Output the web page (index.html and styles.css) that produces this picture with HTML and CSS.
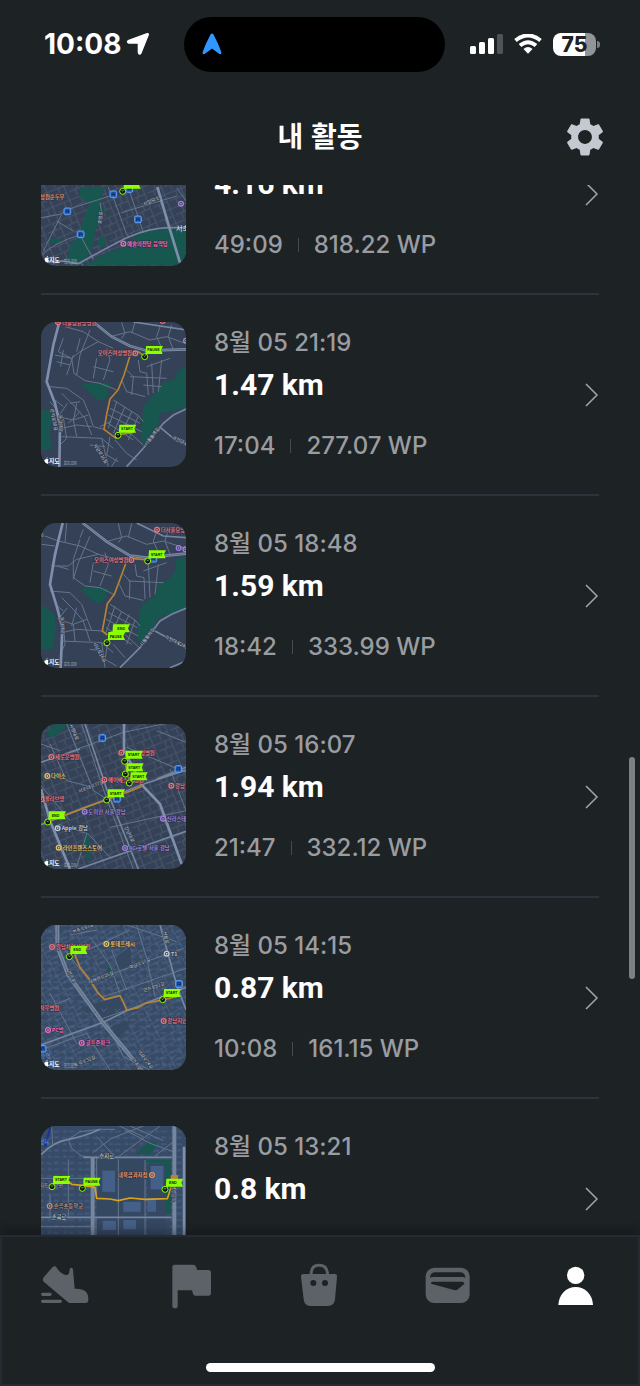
FILE: index.html
```html
<!DOCTYPE html>
<html lang="ko">
<head>
<meta charset="utf-8">
<meta name="viewport" content="width=device-width, initial-scale=1">
<title>내 활동</title>
<link rel="stylesheet" href="styles.css">
</head>
<body>
<svg class="defs" aria-hidden="true">
  <defs>
    <pattern id="streets-a" width="54" height="46" patternUnits="userSpaceOnUse" patternTransform="rotate(-22)">
      <path class="lane" d="M0 6H54M0 28H34M16 6V28M34 0V46M44 28H54M8 28V46"/>
    </pattern>
    <pattern id="streets-b" width="62" height="52" patternUnits="userSpaceOnUse" patternTransform="rotate(-28)">
      <path class="lane" d="M0 5H62M0 32H62M14 5V32M40 5V52M26 32V52M40 18H62"/>
    </pattern>
    <pattern id="blocks" width="46" height="38" patternUnits="userSpaceOnUse">
      <path class="block" d="M4 5h16v6H4zM26 3h14v8H26zM8 22h10v8H8zM24 24h18v5H24z"/>
    </pattern>
    <symbol id="pin" overflow="visible">
      <path class="pin-flag" d="M4 -32H55L49 -20L54 -8H8L2 -2Z"/>
      <circle class="pin-ring" r="9"/>
      <path class="pin-dot" d="M-3 -4L0 0L3 -4"/>
    </symbol>
    <symbol id="station" overflow="visible">
      <rect class="station-box" x="-10" y="-10" width="20" height="20" rx="4"/>
      <path class="station-mark" d="M-4 5V-4H4V5M-4 1H4"/>
    </symbol>
    <symbol id="place" overflow="visible">
      <circle class="place-ring" r="7"/>
      <circle class="place-core" r="3"/>
    </symbol>
    <symbol id="map-credit" overflow="visible">
      <path class="credit-apple" d="M0 -5C3 -7 7 -5 6 -3C4 0 5 3 7 4C5 9 3 9 0 8C-3 9 -5 6 -6 2C-6 -4 -4 -6 0 -5ZM0 -6Q0 -10 4 -11Q4 -7 0 -6"/>
      <text class="credit" x="8" y="7">지도</text>
      <text class="legal" x="52" y="8">법적 정보</text>
    </symbol>
  </defs>
</svg>

<div class="status">
  <div class="status-left">
    <span class="clock">10:08</span>
    <svg class="location" viewBox="0 0 24 24" aria-hidden="true"><path d="M21.500 2.500L2.500 9.500Q2 10 3 10.200H13.200V20.500Q13.500 22 14.200 20.800Z"/></svg>
  </div>
  <div class="island">
    <svg class="nav-arrow" viewBox="0 0 20 22" aria-hidden="true"><path d="M8.5 1.6Q10 -.6 11.5 1.6Q16.5 11 19.4 19.3Q19.6 21.8 17.4 21L10 15.6L2.6 21Q.4 21.8 .6 19.3Q3.5 11 8.5 1.6Z"/></svg>
  </div>
  <div class="status-right">
    <svg class="signal" viewBox="0 0 33 20" aria-hidden="true"><rect y="12" width="6" height="8" rx="1.5"/><rect x="9" y="8" width="6" height="12" rx="1.5"/><rect x="18" y="4" width="6" height="16" rx="1.5"/><rect class="faint" x="27" width="6" height="20" rx="1.5"/></svg>
    <svg class="wifi" viewBox="0 0 28 20" aria-hidden="true"><path class="arc" d="M1.500 6.500Q14 -3.500 26.500 6.500M6 11.600Q14 4.800 22 11.600"/><path d="M9.500 15Q14 11.200 18.500 15L14 19.800Z"/></svg>
    <div class="battery"><span class="battery-level">75</span></div>
  </div>
</div>

<header class="header">
  <h1>내 활동</h1>
  <button class="settings" type="button" aria-label="설정">
    <svg viewBox="0 0 24 24" aria-hidden="true"><path d="M19.140 12.940c.04-.3.060-.61.060-.94 0-.32-.02-.64-.07-.94l2.030-1.580c.18-.14.230-.41.120-.61l-1.920-3.320c-.12-.22-.37-.29-.59-.22l-2.390.960c-.5-.38-1.030-.7-1.620-.94l-.36-2.540c-.04-.24-.24-.41-.48-.41h-3.840c-.24 0-.43.170-.47.410l-.36 2.540c-.59.240-1.130.570-1.620.940l-2.390-.96c-.22-.08-.47 0-.59.220L2.740 8.870c-.12.210-.08.470.120.610l2.030 1.580c-.05.300-.09.630-.09.940s.02.640.07.940l-2.030 1.580c-.18.140-.23.410-.12.610l1.920 3.320c.12.220.370.290.590.220l2.390-.96c.5.380 1.030.7 1.620.940l.36 2.540c.05.240.240.410.480.410h3.840c.24 0 .44-.17.470-.41l.36-2.540c.59-.24 1.130-.56 1.620-.94l2.390.960c.22.080.470 0 .590-.22l1.920-3.320c.12-.22.070-.47-.12-.61l-2.010-1.580zM12 15.600c-1.980 0-3.600-1.620-3.600-3.600s1.620-3.600 3.600-3.600 3.600 1.620 3.600 3.600-1.620 3.600-3.600 3.600z"/></svg>
  </button>
</header>

<main class="feed">
  <ul class="activities">
    <li><a class="activity" href="#activity-1">
      <svg class="thumb" viewBox="33 -180 435 435" aria-hidden="true">
        <rect class="ground" x="33" y="-180" width="435" height="435"/>
        <rect class="dense" x="33" y="-180" width="435" height="435" fill="url(#streets-a)"/>
        <path class="park" d="M150 18H222L211 65L225 95L196 145L190 190L160 253L112 238L120 190L145 170L160 115L178 70L148 45ZM50 174L95 172L90 190L60 188ZM470 150L395 145L350 145L310 170L280 200L230 215L165 253H470ZM200 180L220 162L230 190L212 202Z"/>
        <path class="street" d="M33 110L90 100L130 80L240 45M33 225Q70 185 150 162M40 210L95 100M80 120L130 150M150 162L190 235M300 35L340 155M250 50L290 160L300 170M275 95L440 45M210 65L218 110M120 250Q150 240 160 253M235 18L245 45M440 20L468 60"/>
        <path class="road" d="M33 245L100 240L145 248Q240 195 290 170Q360 140 420 140H468"/>
        <path class="avenue" d="M382 18L418 140L450 245"/>
        <text class="label" transform="translate(342 74) rotate(-22)">사임당로</text>
        <text class="label" transform="translate(214 130) rotate(-84)">효령로</text>
        <text class="district" x="438" y="149">서초</text>
        <g class="food"><text class="poi" x="30" y="54">성원순두부</text></g>
        <g class="leisure"><use href="#place" x="280" y="188"/><text class="poi" x="291" y="194">예술의전당 음악당</text></g>
        <g class="lodging"><use href="#place" x="453" y="68"/></g>
        <use href="#station" x="112" y="91"/><use href="#station" x="152" y="160"/><use href="#station" x="250" y="40"/><use href="#station" x="324" y="115"/><use href="#station" x="298" y="24"/>
        <use href="#pin" x="278" y="31"/>
        <use href="#map-credit" x="50" y="235"/>
      </svg>
      <div class="info"><p class="date">8월 05 22:26</p><p class="distance">4.16 km</p><p class="stats"><span>49:09</span><span class="points">818.22 WP</span></p></div>
      <svg class="chevron" viewBox="0 0 14 24" aria-hidden="true"><path d="M1 1L12 12L1 23"/></svg>
    </a></li>

    <li><a class="activity" href="#activity-2">
      <svg class="thumb" viewBox="33 31 435 435" aria-hidden="true">
        <rect class="ground" x="33" y="31" width="435" height="435"/>
        <path class="park" d="M152 217L200 212L246 216L230 236L240 246L214 269L190 255ZM470 165L445 175L432 205L395 215L380 240L358 260L362 268L340 278L332 375L340 400L360 385L385 340L388 305L420 300L442 294L468 290ZM33 298L58 292L65 330L58 370L66 390L62 415L33 415Z"/>
        <path class="street" d="M105 45L160 60L205 90L250 110M100 80L85 120L125 140L150 120L205 90M75 130L125 140M125 140L132 185L165 207L210 215L260 235M150 80L140 120M180 55L150 130L140 190M80 150L120 160M100 115L92 165M130 130L110 190M60 225L110 230L160 265L175 300L190 345L222 353M95 245L130 280L165 320L185 370M112 275L85 315M120 275L150 270M85 315L130 325L175 310M75 265L100 285M100 320L110 380L90 400M95 350L140 340L185 345M95 375L215 380L250 410M140 275L130 330M150 300L115 335M130 325L140 375M215 380L235 465M240 375L230 430L265 450M255 385L290 425L320 445M290 355L340 400M250 265L325 312L340 330M240 290L330 335M235 310L335 360M235 335L310 385M260 270L235 350M285 285L250 365M305 300L275 365M325 312L295 385M275 205L290 240L345 255M290 175L310 195L305 250M325 145L330 180L350 185L355 250M350 165L420 140M365 155L370 245M395 145L385 240M300 195L410 200M340 220L395 225M240 75L300 60L360 85L410 75L465 95M275 32L285 65L275 80M315 32L305 65M390 45L380 75L395 110M425 40L415 75L430 115M190 165L250 180M200 140L190 200M230 110L240 145L220 205M210 345L240 330M180 400L225 405M60 270L85 300M260 440L245 465"/>
        <path class="road" d="M290 465L340 410L400 335L430 310L468 292M388 345L430 380L468 400M310 31L470 55"/>
        <path class="avenue" d="M88 31L70 100L50 210L75 275L90 340L88 466"/>
        <path class="avenue" d="M190 31L245 75L300 103L350 117L468 113"/>
        <path class="divide" d="M190 31L245 75L300 103L350 117L468 113"/>
        <path class="route" d="M344 134L325 120L300 132L282 190L264 235L240 262L231 303L222 353L258 380L270 368L310 362"/>
        <text class="label" transform="translate(190 400) rotate(58)">사당로16길</text><text class="label" transform="translate(60 292) rotate(78)">관악로30길</text><text class="label" transform="translate(86 310) rotate(88)">동작대로</text>
        <text class="label" transform="translate(350 403) rotate(-52)">서울둘레길</text><text class="label" transform="translate(425 381) rotate(24)">과천대로</text>
        <g class="medical"><use href="#place" x="84" y="32"/><text class="poi" x="96" y="40">더블림요양병원</text><use href="#place" x="316" y="125"/><text class="poi" x="203" y="131">오미즈여성병원</text><use href="#place" x="398" y="28"/></g>
        <g class="lodging"><use href="#place" x="468" y="87"/></g>
        <use href="#pin" x="344" y="135"/><text class="pin-text" x="352" y="119">PAUSE</text>
        <use href="#pin" x="264" y="371"/><text class="pin-text" x="273" y="355">START</text>
        <use href="#map-credit" x="49" y="448"/>
      </svg>
      <div class="info"><p class="date">8월 05 21:19</p><p class="distance">1.47 km</p><p class="stats"><span>17:04</span><span class="points">277.07 WP</span></p></div>
      <svg class="chevron" viewBox="0 0 14 24" aria-hidden="true"><path d="M1 1L12 12L1 23"/></svg>
    </a></li>

    <li><a class="activity" href="#activity-3">
      <svg class="thumb" viewBox="33 36 435 435" aria-hidden="true">
        <rect class="ground" x="33" y="36" width="435" height="435"/>
        <path class="park" d="M152 232L195 227L241 230L225 250L232 260L206 279L185 268ZM470 142L440 142L435 180L415 205L385 220L375 255L338 280L328 300L322 370L328 402L350 380L375 345L385 320L420 310L468 295ZM33 280L58 298L75 310L78 355L68 415L33 415Z"/>
        <path class="street" d="M85 90L150 105L205 130L260 145M80 125L65 165L115 165L140 145L205 130M130 145L130 200L165 225L210 230L255 252M150 85L130 145M180 75L145 155L130 205M80 165L115 175M60 240L120 245L155 280L170 320L185 358L218 360M95 260L130 295L160 330L180 390M112 290L85 325M85 325L130 340L170 325M75 280L100 300M100 335L105 400L90 430M95 365L140 355L185 358M95 390L215 395L250 425M140 290L125 345M130 340L135 390M215 395L225 470M235 385L225 445L260 465M250 400L285 440M285 370L330 412M240 280L315 327L330 345M235 305L322 350M228 325L325 375M228 350L305 400M255 285L228 365M275 300L240 380M298 310L265 380M315 327L290 400M268 220L285 255L340 268M280 190L300 210L298 265M315 160L320 195L342 200L345 265M340 180L410 155M355 160L360 260M385 160L375 250M295 210L400 215M235 90L290 75L350 100L400 90L460 110M265 37L275 80L265 95M305 37L295 80M380 60L370 90L385 125M415 55L405 90L420 130M190 180L245 195M190 155L180 215M225 125L235 160L210 225M180 415L220 420M35 100L75 105M45 75L85 90M110 36L105 95M160 55L150 80"/>
        <path class="road" d="M270 470L330 410L390 330L425 310L468 292M375 360L430 390L468 410M320 36L400 75L468 80M420 470L468 450"/>
        <path class="avenue" d="M98 36L75 130L60 220L80 285L97 350L92 471"/>
        <path class="avenue" d="M158 36L230 92L300 134L350 140L468 128"/><path class="divide" d="M158 36L230 92L300 134L350 140L468 128"/>
        <path class="route" d="M353 147L304 142L290 150L270 205L253 250L232 278L217 360L232 372"/>
        <text class="label" transform="translate(188 397) rotate(60)">사당로16길</text><text class="label" transform="translate(91 318) rotate(88)">동작대로</text><text class="label" transform="translate(337 407) rotate(-54)">서울둘레길</text><text class="label" transform="translate(403 381) rotate(26)">과천대로24길</text><text class="label" x="34" y="77">6</text>
        <g class="medical"><use href="#place" x="381" y="56"/><text class="poi" x="392" y="62">더서울요양병원</text><use href="#place" x="304" y="147"/><text class="poi" x="192" y="153">오미즈여성병원</text></g>
        <g class="lodging"><use href="#place" x="446" y="111"/><use href="#place" x="466" y="115"/></g>
        <use href="#station" x="370" y="143"/>
        <use href="#pin" x="353" y="150"/><text class="pin-text" x="362" y="134">START</text>
        <use href="#pin" x="245" y="372"/><text class="pin-text" x="262" y="356">END</text>
        <use href="#pin" x="231" y="395"/><text class="pin-text" x="239" y="380">PAUSE</text>
        <use href="#map-credit" x="49" y="453"/>
      </svg>
      <div class="info"><p class="date">8월 05 18:48</p><p class="distance">1.59 km</p><p class="stats"><span>18:42</span><span class="points">333.99 WP</span></p></div>
      <svg class="chevron" viewBox="0 0 14 24" aria-hidden="true"><path d="M1 1L12 12L1 23"/></svg>
    </a></li>

    <li><a class="activity" href="#activity-4">
      <svg class="thumb" viewBox="33 40 435 435" aria-hidden="true">
        <rect class="ground" x="33" y="40" width="435" height="435"/>
        <rect class="dense" x="33" y="40" width="435" height="435" fill="url(#streets-a)"/>
        <path class="park" d="M52 62L72 42L106 40L104 52L78 76L58 80ZM165 375L178 366L178 400L184 444L168 444L170 420L162 400ZM40 460L68 462L60 475H45Z"/>
        <path class="street" d="M33 155L280 65L400 40M110 40L190 240L230 265M155 40L230 265L310 475M380 60L468 95M420 175L468 300M60 100L110 210L190 230M33 225L120 330M33 100L90 120M290 110L468 185M85 340L175 370L240 440M240 350L468 300M140 470L170 370"/>
        <path class="road" d="M165 40L235 250L325 475M145 475L468 362M380 205L468 170M33 155L150 115M33 342L230 266L335 222L468 178"/>
        <path class="avenue" d="M282 40V118L335 222L390 280L455 460M33 235L60 330L120 475"/>
        <path class="route" d="M54 333L100 315L160 292L230 268L300 242L332 229L333 213L298 214M284 150L290 180L298 210"/>
        <text class="label" transform="translate(148 247) rotate(-22)">서초대로77길</text><text class="label" transform="translate(118 42) rotate(68)">사평대로</text><text class="label" transform="translate(282 350) rotate(64)">강남대로</text>
        <g class="medical"><use href="#place" x="64" y="139"/><text class="poi" x="75" y="145">세로운병원</text><use href="#place" x="274" y="126"/><text class="poi" x="330" y="132">성병원</text><use href="#place" x="223" y="207"/><text class="poi" x="234" y="213">메이베스트 병원</text><use href="#place" x="34" y="266"/><text class="poi" x="44" y="272">올리브영</text><use href="#place" x="424" y="225"/><text class="poi" x="435" y="231">강남</text></g>
        <g class="shop"><use href="#place" x="52" y="196"/><text class="poi" x="63" y="202">다이소</text><use href="#place" x="86" y="411"/><text class="poi" x="98" y="417">라인프렌즈스토어</text></g>
        <g class="lodging"><use href="#place" x="164" y="303"/><text class="poi" x="175" y="309">도미인 서울 강남</text><use href="#place" x="399" y="324"/><text class="poi" x="410" y="330">신라스테이</text><use href="#place" x="285" y="412"/><text class="poi" x="297" y="418">AC 호텔 서울 강남</text></g>
        <g class="plain"><use href="#place" x="83" y="353"/><text class="poi" x="95" y="359">Apple 강남</text></g>
        <use href="#station" x="217" y="82"/><use href="#station" x="445" y="175"/><use href="#station" x="261" y="264"/>
        <use href="#pin" x="284" y="152"/><text class="pin-text" x="293" y="136">START</text>
        <use href="#pin" x="286" y="190"/><text class="pin-text" x="295" y="174">START</text>
        <use href="#pin" x="298" y="217"/><text class="pin-text" x="307" y="201">START</text>
        <use href="#pin" x="230" y="268"/><text class="pin-text" x="239" y="252">START</text>
        <use href="#pin" x="53" y="334"/><text class="pin-text" x="65" y="318">END</text>
        <use href="#map-credit" x="49" y="457"/>
      </svg>
      <div class="info"><p class="date">8월 05 16:07</p><p class="distance">1.94 km</p><p class="stats"><span>21:47</span><span class="points">332.12 WP</span></p></div>
      <svg class="chevron" viewBox="0 0 14 24" aria-hidden="true"><path d="M1 1L12 12L1 23"/></svg>
    </a></li>

    <li><a class="activity" href="#activity-5">
      <svg class="thumb" viewBox="33 45 435 435" aria-hidden="true">
        <rect class="city" x="33" y="45" width="435" height="435"/>
        <rect x="33" y="45" width="435" height="435" fill="url(#blocks)"/>
        <rect class="dense" x="33" y="45" width="435" height="435" fill="url(#streets-b)"/>
        <path class="quad" d="M150 295L222 272L265 262L285 300L230 335L205 330ZM255 145L300 110L305 165L268 180ZM245 350L300 330L295 355L260 385Z"/>
        <path class="park" d="M229 177L243 170L249 190L238 196Z"/>
        <path class="street" d="M135 135L195 110L300 60M100 115L180 215L205 255M180 80L240 165L270 250M120 75L200 60M245 120L290 240M320 45L350 145L375 260M180 215L460 115M215 262L468 175M33 300L120 265M60 250L140 400M33 420L170 370L240 480M290 45L440 95M205 330L290 300M230 335L280 440L360 480"/>
        <path class="road" d="M33 405L220 337L290 302L468 232M390 45L440 225L468 300M220 340L300 430"/>
        <path class="avenue wide" d="M82 45V110L115 195L220 340L335 480"/><path class="divide" d="M82 45V110L115 195L220 340L335 480"/>
        <path class="route" d="M134 133L150 172L183 214L205 250L224 269L270 257L282 280L290 300L325 293L345 280L397 270L440 260"/>
        <text class="label" transform="translate(130 72) rotate(-22)">언주로93길</text><text class="label" transform="translate(178 222) rotate(-22)">테헤란로25길</text><text class="label" transform="translate(300 178) rotate(-22)">역삼로17길</text><text class="label" transform="translate(342 247) rotate(-20)">언주로81길</text><text class="label" transform="translate(398 65) rotate(76)">선릉로</text><text class="label" transform="translate(112 185) rotate(64)">언주로</text><text class="label" transform="translate(305 450) rotate(55)">언주로</text><text class="label" transform="translate(135 470) rotate(-22)">도곡로32길</text><text class="label" transform="translate(322 425) rotate(52)">역삼로24길</text>
        <path class="marks" d="M215 295l5 10l12-12M255 297l5 10l12-12M180 307l5 10l12-12"/>
        <g class="medical"><use href="#place" x="66" y="111"/><text class="poi" x="78" y="117">강남차여성병원</text><text class="poi" x="29" y="299">차우병원</text><use href="#place" x="401" y="333"/><text class="poi" x="412" y="339">강남지인</text></g>
        <g class="shop"><use href="#place" x="229" y="102"/><text class="poi" x="241" y="108">롯데프레시</text></g>
        <g class="plain"><use href="#place" x="410" y="131"/><text class="poi" x="423" y="137">T1</text></g>
        <g class="leisure"><use href="#place" x="54" y="360"/><text class="poi" x="65" y="367">PC방</text><use href="#place" x="155" y="399"/><text class="poi" x="167" y="405">골프존파크</text></g>
        <use href="#station" x="447" y="222"/><use href="#station" x="38" y="416"/><text class="transit" x="32" y="445">수역</text>
        <use href="#pin" x="118" y="140"/><text class="pin-text" x="130" y="124">END</text>
        <use href="#pin" x="398" y="269"/><text class="pin-text" x="407" y="253">START</text>
        <use href="#map-credit" x="49" y="461"/>
      </svg>
      <div class="info"><p class="date">8월 05 14:15</p><p class="distance">0.87 km</p><p class="stats"><span>10:08</span><span class="points">161.15 WP</span></p></div>
      <svg class="chevron" viewBox="0 0 14 24" aria-hidden="true"><path d="M1 1L12 12L1 23"/></svg>
    </a></li>

    <li><a class="activity" href="#activity-6">
      <svg class="thumb" viewBox="33 48 435 435" aria-hidden="true">
        <rect class="city" x="33" y="48" width="435" height="435"/>
        <rect x="33" y="48" width="435" height="435" fill="url(#blocks)"/>
        <path class="quad" d="M200 148H345V375H200ZM352 160H408V375H352Z"/>
        <path class="building" d="M217 182H255V245H217ZM280 275H332V305H280ZM218 332H258V360H218ZM280 330H318V358H280ZM362 168H400V238H362ZM352 265H378V305H352Z"/>
        <path class="park" d="M318 130L352 98L385 96L360 135ZM348 150H422V312H408V175L400 158H348Z"/>
        <path class="street" d="M115 88L150 65L210 58H255M115 88L125 115L155 138L188 142M65 48L68 105L33 135M115 88L68 105M188 128L245 85L340 48M285 60L360 100L430 125M300 48L400 92M268 138L390 48M375 138L430 95M200 142V265M265 148V375M345 150V375M198 322V375M268 48L340 80M33 205H185M115 148V320M33 350H185M60 255V322M200 80L245 130"/>
        <path class="road" d="M33 134Q70 95 115 88T210 58M160 142H425M33 322H425"/>
        <path class="avenue wide" d="M188 142V483M433 48V483"/>
        <path class="avenue" d="M462 110V483"/>
        <path class="rail" d="M62 48L45 110"/>
        <path class="route bright" d="M112 210L125 223L158 226L195 232L200 265L240 267L265 272L300 264L345 268L412 266L424 230L432 207"/>
        <text class="label strong" x="208" y="143">수지로</text><text class="label strong" x="65" y="328">손곡로</text><text class="label" x="31" y="231">지도 정로인</text><text class="label" transform="translate(426 225) rotate(90)">경수고속</text>
        <text class="transit" x="28" y="101">성복</text>
        <g class="food"><use href="#place" x="366" y="195"/><text class="poi" x="264" y="202">내복곰과자점</text></g>
        <g class="school"><use href="#place" x="59" y="288"/><text class="poi" x="71" y="294">손곡초등학교</text></g>
        <rect class="shield" x="422" y="195" width="22" height="14" rx="3"/>
        <use href="#pin" x="66" y="230"/><text class="pin-text" x="75" y="214">START</text>
        <use href="#pin" x="157" y="235"/><text class="pin-text" x="166" y="219">PAUSE</text>
        <use href="#pin" x="405" y="238"/><text class="pin-text" x="417" y="222">END</text>
      </svg>
      <div class="info"><p class="date">8월 05 13:21</p><p class="distance">0.8 km</p><p class="stats"><span>09:41</span><span class="points">148.20 WP</span></p></div>
      <svg class="chevron" viewBox="0 0 14 24" aria-hidden="true"><path d="M1 1L12 12L1 23"/></svg>
    </a></li>
  </ul>
</main>
<div class="scroll-thumb"></div>

<footer class="dock">
  <nav class="tabs" aria-label="주 메뉴">
    <a class="tab" href="#run" aria-label="러닝"><svg viewBox="111 117 162 162" aria-hidden="true"><path d="M158 141Q165 136 170 143Q182 162 198 165Q205 166 207 160L209 148Q211 142 216 144Q219 145 219 150L224 206Q265 204 265 236V240Q265 249 256 249H207L131 185Q126 179 131 172ZM127 218H151Q155 219 155 223T151 228H127Q123 227 123 223T127 218ZM127 239H181Q186 240 186 244T181 249H127Q123 248 123 244T127 239Z"/></svg></a>
    <a class="tab" href="#quests" aria-label="퀘스트"><svg viewBox="495 117 162 162" aria-hidden="true"><path d="M525 134H580Q587 134 589 142L591 150H625Q633 150 633 158V219Q633 227 625 227H586Q581 227 579 221L576 211H533V257Q533 265 525 265Q517 265 517 257V142Q517 134 525 134Z"/></svg></a>
    <a class="tab" href="#shop" aria-label="상점"><svg viewBox="879 117 162 162" aria-hidden="true"><path d="M910 162H929Q929 131 957 131Q986 131 987 162H1005Q1012 162 1011 170L1005 238Q1003 258 984 258H931Q913 258 911 238L903 170Q903 162 910 162ZM938 162H978Q977 140 957 140Q938 140 938 162Z"/><circle class="cut" cx="940" cy="189" r="9"/><circle class="cut" cx="975" cy="189" r="9"/></svg></a>
    <a class="tab" href="#wallet" aria-label="지갑"><svg viewBox="303 117 162 162" aria-hidden="true"><rect x="317" y="143" width="132" height="106" rx="26"/><path class="cut" d="M330 174V172Q332 157 346 157H420Q434 157 436 172V174Q434 171 427 171H339Q332 171 330 174ZM337 185H428Q434 187 433 192L411 210Q407 211 402 210L333 191Q332 187 337 185Z"/></svg></a>
    <a class="tab active" href="#me" aria-label="내 활동" aria-current="page"><svg viewBox="687 117 162 162" aria-hidden="true"><circle cx="767" cy="166" r="26"/><path d="M715 255Q716 232 731 216Q746 201 767 201T803 216Q818 232 819 255Z"/></svg></a>
  </nav>
  <div class="home-bar"></div>
</footer>
</body>
</html>
```

FILE: styles.css
```css
:root {
  --bg: #1d2225;
  --muted: #999da1;
  --line: #2b343d;
  --lime: #8cff00;
}

* { box-sizing: border-box; }

body {
  position: relative;
  display: flex;
  flex-direction: column;
  height: 100vh;
  margin: 0;
  overflow: hidden;
  background: var(--bg);
  color: #fff;
  font-family: Inter, "Noto Sans CJK KR", sans-serif;
}

h1, p, ul { margin: 0; padding: 0; }
ul { list-style: none; }
a { color: inherit; text-decoration: none; }
svg { display: block; flex: none; }
.defs { position: absolute; width: 0; height: 0; }

/* Status bar */
.status {
  display: grid;
  flex: none;
  grid-template-columns: 1fr 261px 1fr;
  align-items: center;
  height: 88px;
  padding-right: 11px;
}
.status-left { display: flex; align-items: center; gap: 5px; padding-left: 44px; }
.clock { font-size: 28px; font-weight: 700; line-height: 32px; }
.location {
  width: 24px;
  height: 24px;
  fill: #fff;
  stroke: #fff;
  stroke-width: 3;
  stroke-linejoin: round;
}
.island {
  display: flex;
  align-items: center;
  height: 55px;
  padding-left: 18px;
  border-radius: 28px;
  background: #000;
}
.nav-arrow { width: 20px; height: 22px; fill: #2f97ff; }
.status-right { display: flex; align-items: center; justify-content: flex-end; gap: 11px; padding-right: 33px; }
.signal { width: 33px; height: 20px; fill: #fff; }
.signal .faint { fill: #505457; }
.wifi { width: 28px; height: 20px; fill: #fff; }
.wifi .arc { fill: none; stroke: #fff; stroke-width: 4; }
.battery {
  position: relative;
  width: 43px;
  height: 23px;
  border-radius: 8px;
  background: linear-gradient(90deg, #fff 75%, #929496 75%);
}
.battery::after {
  content: "";
  position: absolute;
  top: 8px;
  right: -4px;
  width: 3px;
  height: 7px;
  border-radius: 0 3px 3px 0;
  background: #7c7f81;
}
.battery-level {
  display: block;
  color: #1d2225;
  font-size: 21px;
  font-weight: 800;
  line-height: 23px;
  text-align: center;
}

/* Header */
.header {
  display: grid;
  flex: none;
  grid-template-columns: 1fr auto 1fr;
  align-items: center;
  height: 97px;
  padding: 0 32px;
}
.header h1 {
  grid-column: 2;
  padding-bottom: 4px;
  font-family: "Noto Sans CJK KR", sans-serif;
  font-size: 28px;
  font-weight: 700;
  line-height: 44px;
}
.settings {
  justify-self: end;
  padding: 0;
  border: 0;
  background: none;
}
.settings svg { width: 46px; height: 46px; fill: #c4c8d0; }

/* Activity list */
.feed { flex: 1; min-height: 0; overflow: hidden; padding: 0 41px; }
.activities { margin-top: -91px; }
.activities li { border-bottom: 2px solid var(--line); }
.activity {
  display: flex;
  align-items: center;
  gap: 28px;
  padding: 27px 0;
}
.info { flex: 1; }
.date, .stats {
  color: var(--muted);
  font-size: 24px;
  font-weight: 500;
  line-height: 32px;
}
.distance {
  margin: 8px 0 27px;
  font-family: Roboto, sans-serif;
  font-size: 30px;
  font-weight: 700;
  line-height: 36px;
}
.stats { display: flex; align-items: center; gap: 15px; }
.points { display: flex; align-items: center; gap: 15px; }
.points::before { content: ""; width: 1px; height: 14px; background: #464b4f; }
.chevron {
  width: 14px;
  height: 24px;
  fill: none;
  stroke: #a2a5a8;
  stroke-width: 1.5;
}
.scroll-thumb {
  position: absolute;
  top: 757px;
  right: 5px;
  width: 6px;
  height: 222px;
  border-radius: 3px;
  background: #7c8082;
}

/* Map thumbnails */
.thumb { width: 145px; height: 145px; border-radius: 15px; }
.thumb path { fill: none; }
.thumb .ground { fill: #344156; }
.thumb .city { fill: #374b67; }
.lane { fill: none; stroke: #65748b; stroke-width: 2; }
.block { fill: #3f587a; }
.dense { opacity: .6; }
.thumb .park { fill: #17574f; }
.thumb .quad { fill: #354862; }
.thumb .building { fill: #456088; }
.street { stroke: #66758b; stroke-width: 3; }
.road { stroke: #7584a0; stroke-width: 5; }
.avenue { stroke: #7f8eaa; stroke-width: 8; }
.avenue.wide { stroke: #77869f; stroke-width: 12; }
.divide { stroke: #4c5a70; stroke-width: 2; }
.rail { stroke: #1d3295; stroke-width: 6; }
.marks { stroke: #4d6384; stroke-width: 3; }
.route { stroke: #b58333; stroke-width: 5; stroke-linejoin: round; }
.route.bright { stroke: #d8a21b; }
.thumb text { font-family: "Noto Sans CJK KR", sans-serif; }
.label { fill: #c0cad8; font-size: 14px; stroke: #2c394c; stroke-width: 3; paint-order: stroke; }
.label.strong { font-size: 16px; fill: #dce3ec; }
.district { fill: #dce3ec; font-size: 21px; }
.poi { fill: currentColor; font-size: 16px; font-weight: 700; stroke: #263145; stroke-width: 3; paint-order: stroke; }
.transit { fill: #4c9bf0; font-size: 16px; }
.medical { color: #ed737c; }
.food { color: #e49568; }
.shop { color: #e6c361; }
.lodging { color: #a481de; }
.leisure { color: #ef6bb9; }
.plain { color: #c2cbd5; }
.school { color: #b58d7d; }
.place-ring { fill: #2a3344; stroke: currentColor; stroke-width: 4; }
.place-core { fill: currentColor; }
.station-box { fill: #2867c9; stroke: #62a0f4; stroke-width: 3; }
.station-mark { fill: none; stroke: #12305f; stroke-width: 3; }
.shield { fill: #bd842e; }
.pin-ring { fill: #111b13; stroke: var(--lime); stroke-width: 3; }
.pin-dot { fill: none; stroke: #9fb0a4; stroke-width: 2; }
.thumb .pin-text { fill: #152400; font-family: "Liberation Sans", sans-serif; font-size: 11px; font-weight: 700; }
.credit { fill: #fff; font-size: 17px; font-weight: 700; }
.legal { fill: #a8b1be; font-size: 10px; text-decoration: underline; }
.credit-apple { fill: #fff; }
.pin-flag { fill: var(--lime); }

/* Bottom navigation */
.dock {
  position: relative;
  display: flex;
  flex: none;
  flex-direction: column;
  align-items: center;
  justify-content: space-between;
  height: 151px;
  padding: 24px 0 14px;
  background: var(--bg);
  box-shadow: inset 0 2px #252a33, inset 0 0 0 2px #252a33, 0 -2px 12px rgba(0, 0, 0, .4);
}
.tabs { display: grid; grid-template-columns: repeat(5, 1fr); width: 100%; }
.tab { display: grid; justify-items: center; color: #5c6268; }
.tab svg { width: 54px; height: 54px; fill: currentColor; }
.tab .cut { fill: var(--bg); }
.tab.active { color: #fff; }
.home-bar { width: 229px; height: 9px; border-radius: 5px; background: #fff; }
```
